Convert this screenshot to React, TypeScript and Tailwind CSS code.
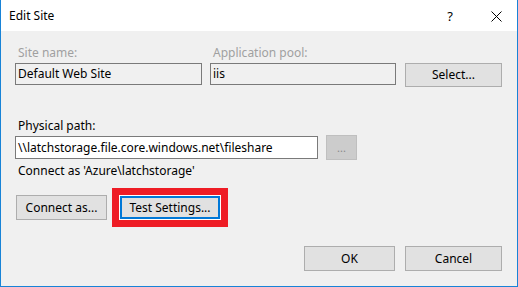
import React from "react";

const font = { fontFamily: '"Noto Sans", "Open Sans", sans-serif' };

function Btn({ children, className = "" }: { children: React.ReactNode; className?: string }) {
  return (
    <div
      className={
        "flex items-center justify-center bg-[#e1e1e1] border border-[#adadad] text-[12px] text-black " +
        className
      }
    >
      {children}
    </div>
  );
}

export default function App() {
  return (
    <div
      className="w-[518px] h-[287px] bg-[#f0f0f0] border-x border-b border-[#1883d7] flex flex-col text-[12px] leading-[16px] text-black"
      style={font}
    >
      {/* Title bar */}
      <div className="h-[31px] bg-white flex items-center pl-[8px] pr-[15px] shrink-0">
        <span className="text-[12px]">Edit Site</span>
        <span className="ml-auto text-[13px] mr-[38px]">?</span>
        <svg width="11" height="11" viewBox="0 0 11 11" className="mt-[1px]">
          <path d="M0.5 0.5 L10.5 10.5 M10.5 0.5 L0.5 10.5" stroke="#000" strokeWidth="1" />
        </svg>
      </div>

      {/* Body */}
      <div className="flex flex-col pl-[14px] pr-[15px] pt-[14px] pb-[15px] flex-1">
        {/* Row 1 */}
        <div className="flex items-start">
          <div className="flex flex-col w-[187px]">
            <span className="pl-[3px] text-[#a0a0a0]">Site name:</span>
            <div className="mt-[2px] h-[22px] border border-[#7a7a7a] bg-[#f0f0f0] flex items-center pl-[2px]">
              Default Web Site
            </div>
          </div>
          <div className="flex flex-col w-[186px] ml-[8px]">
            <span className="pl-[3px] text-[#a0a0a0]">Application pool:</span>
            <div className="mt-[2px] h-[22px] border border-[#7a7a7a] bg-[#f0f0f0] flex items-center pl-[2px]">
              iis
            </div>
          </div>
          <Btn className="ml-[9px] mt-[18px] w-[97px] h-[24px]">Select...</Btn>
        </div>

        {/* Physical path */}
        <span className="mt-[31px] pl-[3px]">Physical path:</span>
        <div className="mt-[1px] flex items-center">
          <div className="w-[303px] h-[23px] border border-[#7a7a7a] bg-white flex items-center pl-[2px] whitespace-nowrap overflow-hidden">
            \\latchstorage.file.core.windows.net\fileshare
          </div>
          <div className="ml-[8px] w-[31px] h-[25px] bg-[#cccccc] border border-[#bfbfbf] flex items-center justify-center text-[#8a8a8a] text-[11px]">
            ...
          </div>
        </div>
        <span className="mt-[3px] pl-[3px]">Connect as 'Azure\latchstorage'</span>

        {/* Connect / Test */}
        <div className="mt-[9px] flex items-center">
          <Btn className="ml-[1px] w-[91px] h-[25px]">Connect as...</Btn>
          <div className="ml-[5px] border-[7px] border-[#ee1c25] bg-white p-px">
            <div className="w-[100px] h-[23px] bg-[#e1e1e1] border-2 border-[#0078d7] flex items-center justify-center">
              Test Settings...
            </div>
          </div>
        </div>

        {/* OK / Cancel */}
        <div className="mt-auto flex justify-end">
          <Btn className="w-[91px] h-[25px]">OK</Btn>
          <Btn className="ml-[10px] w-[97px] h-[25px]">Cancel</Btn>
        </div>
      </div>
    </div>
  );
}
